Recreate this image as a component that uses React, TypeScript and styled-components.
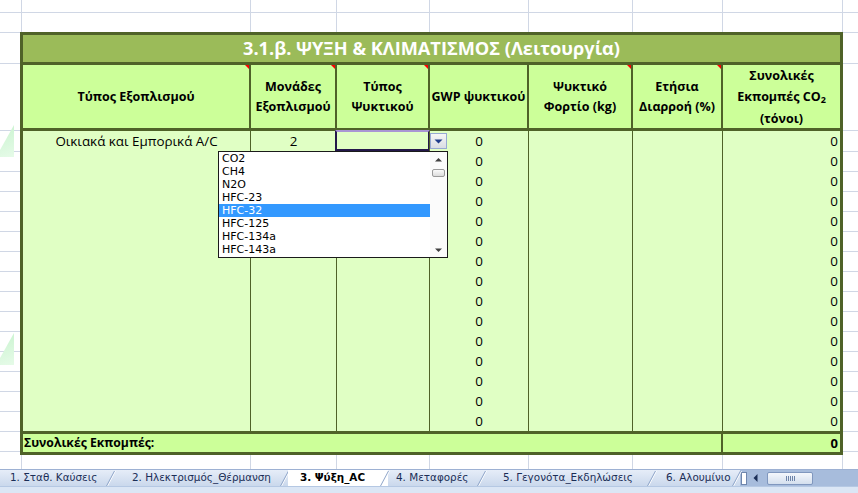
import React from 'react'
import styled, { createGlobalStyle } from 'styled-components'

const GRID = '#d0d7e5'
const OLIVE = '#4f6228'
const HEAD_BG = '#ccff99'
const CELL_BG = '#e0ffc4'

const GlobalStyle = createGlobalStyle`
  html, body {
    margin: 0;
    padding: 0;
    background: #fff;
  }
  body {
    font-family: 'Open Sans', 'Noto Sans', sans-serif;
    overflow: hidden;
  }
`

// gridlines of the sheet behind the table
const lines = (xs: number[], ys: number[]) => {
  const v = xs.map((x) => `linear-gradient(${GRID}, ${GRID}) ${x}px 0 / 1px 100% no-repeat`)
  const h = ys.map((y) => `linear-gradient(${GRID}, ${GRID}) 0 ${y}px / 100% 1px no-repeat`)
  return [...v, ...h, '#fff'].join(', ')
}

const COL_X = [21, 250, 336, 429, 528, 632, 722, 842]
const ROW_Y = [0, 31, 98, ...Array.from({ length: 16 }, (_, i) => 119 + i * 20)]

const zeros = Array.from({ length: 15 }, () => '0')

const refrigerants = ['CO2', 'CH4', 'N2O', 'HFC-23', 'HFC-32', 'HFC-125', 'HFC-134a', 'HFC-143a']

const tabs = [
  { label: '1. Σταθ. Καύσεις', w: 114, pad: 10 },
  { label: '2. Ηλεκτρισμός_Θέρμανση', w: 174, pad: 18 },
  { label: '3. Ψύξη_AC', w: 100, pad: 12, active: true },
  { label: '4. Μεταφορές', w: 97, pad: 8 },
  { label: '5. Γεγονότα_Εκδηλώσεις', w: 170, pad: 18 },
  { label: '6. Αλουμίνιο', w: 85, pad: 11 },
]

const App: React.FC = () => {
  return (
    <Sheet>
      <GlobalStyle />
      <TopArea />
      <Middle>
        <Margin $w={20}>
          <Leaf $top={93} />
          <Leaf $top={301} />
        </Margin>
        <Table>
          <Title>3.1.β. ΨΥΞΗ &amp; ΚΛΙΜΑΤΙΣΜΟΣ (Λειτουργία)</Title>
          <HeaderRow>
            <HeadCell $note>
              <span>Τύπος Εξοπλισμού</span>
            </HeadCell>
            <HeadCell $note>
              <span>
                Μονάδες
                <br />
                Εξοπλισμού
              </span>
            </HeadCell>
            <HeadCell $note>
              <span>
                Τύπος
                <br />
                Ψυκτικού
              </span>
            </HeadCell>
            <HeadCell>
              <span>GWP ψυκτικού</span>
            </HeadCell>
            <HeadCell $note>
              <span>
                Ψυκτικό
                <br />
                Φορτίο (kg)
              </span>
            </HeadCell>
            <HeadCell $note>
              <span>
                Ετήσια
                <br />
                Διαρροή (%)
              </span>
            </HeadCell>
            <HeadCell $tall>
              <span>
                Συνολικές
                <br />
                Εκπομπές CO<Sub>2</Sub>
                <br />
                (τόνοι)
              </span>
            </HeadCell>
          </HeaderRow>
          <Body>
            <BodyCol $align="center">
              <Line>Οικιακά και Εμπορικά A/C</Line>
            </BodyCol>
            <BodyCol $align="center">
              <Line>2</Line>
            </BodyCol>
            <BodyCol $align="center">
              <Line $active />
            </BodyCol>
            <BodyCol $align="center">
              {zeros.map((z, i) => (
                <Line key={i}>{z}</Line>
              ))}
            </BodyCol>
            <BodyCol $align="center" />
            <BodyCol $align="center" />
            <BodyCol $align="right">
              {zeros.map((z, i) => (
                <Line key={i}>{z}</Line>
              ))}
            </BodyCol>

            <DropButton>
              <svg width="9" height="5" viewBox="0 0 9 5">
                <path d="M0.5 0.5 H8.5 L4.5 4.5 Z" fill="#1f3d8c" />
              </svg>
            </DropButton>
            <List>
              <Items>
                {refrigerants.map((r) => (
                  <Item key={r} $selected={r === 'HFC-32'}>
                    {r}
                  </Item>
                ))}
              </Items>
              <ScrollBar>
                <svg width="9" height="5" viewBox="0 0 9 5">
                  <path d="M1 4.5 H8 L4.5 1 Z" fill="#404040" />
                </svg>
                <Thumb />
                <Spacer />
                <svg width="9" height="5" viewBox="0 0 9 5">
                  <path d="M1 0.5 H8 L4.5 4 Z" fill="#404040" />
                </svg>
              </ScrollBar>
            </List>
          </Body>
          <TotalRow>
            <TotalCell>Συνολικές Εκπομπές:</TotalCell>
            <TotalCell $right>0</TotalCell>
          </TotalRow>
        </Table>
        <Margin $w={15} />
      </Middle>
      <BottomArea />
      <TabBar>
        <Tabs>
          {tabs.map((t) => (
            <Tab key={t.label} $w={t.w} $pad={t.pad} $active={t.active}>
              {t.label}
            </Tab>
          ))}
        </Tabs>
        <ScrollZone>
          <SplitBox />
          <svg width="5" height="8" viewBox="0 0 5 8">
            <path d="M4.5 0 V8 L0.5 4 Z" fill="#1b2e57" />
          </svg>
          <HThumb>
            <Grip />
          </HThumb>
        </ScrollZone>
      </TabBar>
      <Strip />
    </Sheet>
  )
}

const Sheet = styled.div`
  position: relative;
  display: flex;
  flex-direction: column;
  width: 858px;
  height: 493px;
  overflow: hidden;
  background: #fff;
`

const TopArea = styled.div`
  height: 32px;
  background: ${lines(COL_X, [12])};
`

const Middle = styled.div`
  display: flex;
  height: 423px;
`

const Margin = styled.div<{ $w: number }>`
  position: relative;
  flex: 0 0 ${(p) => p.$w}px;
  background: ${lines([], ROW_Y)};
`

const Leaf = styled.div<{ $top: number }>`
  position: absolute;
  left: 0;
  top: ${(p) => p.$top}px;
  width: 14px;
  height: 32px;
  background: linear-gradient(160deg, #c9f3cf, #e6fbe8);
  clip-path: polygon(0 78%, 100% 0, 100% 100%, 0 100%);
`

const Table = styled.div`
  display: flex;
  flex-direction: column;
  width: 823px;
  flex: 0 0 823px;
  border: 3px solid ${OLIVE};
  box-sizing: border-box;
  color: #000;
`

const Title = styled.div`
  height: 30px;
  box-sizing: border-box;
  border-bottom: 3px solid ${OLIVE};
  background: #9bbb59;
  color: #fff;
  font-weight: 700;
  font-size: 18.2px;
  line-height: 27px;
  text-align: center;
  white-space: nowrap;
`

const HeaderRow = styled.div`
  display: grid;
  grid-template-columns: 226px 86px 93px 99px 104px 90px 119px;
  height: 66px;
  box-sizing: border-box;
  border-bottom: 3px solid ${OLIVE};
  background: ${HEAD_BG};
`

const HeadCell = styled.div<{ $note?: boolean; $tall?: boolean }>`
  position: relative;
  display: flex;
  align-items: center;
  justify-content: center;
  text-align: center;
  white-space: nowrap;
  font-weight: 700;
  font-size: 12.5px;
  line-height: ${(p) => (p.$tall ? '21px' : '20px')};

  & + & {
    border-left: 2px solid ${OLIVE};
  }

  &::after {
    content: '';
    display: ${(p) => (p.$note ? 'block' : 'none')};
    position: absolute;
    top: 0;
    right: 0;
    border-top: 4px solid #ff0000;
    border-left: 4px solid transparent;
  }
`

const Sub = styled.span`
  font-size: 9px;
  position: relative;
  top: 2px;
`

const Body = styled.div`
  position: relative;
  display: grid;
  grid-template-columns: 227px 86px 93px 99px 104px 90px 118px;
  height: 300px;
  background: ${CELL_BG};
`

const BodyCol = styled.div<{ $align: 'left' | 'center' | 'right' }>`
  display: flex;
  flex-direction: column;
  text-align: ${(p) => p.$align};
  padding-right: ${(p) => (p.$align === 'right' ? '2px' : '0')};
  font-size: 13.4px;

  & + & {
    border-left: 1px solid ${OLIVE};
  }
`

const Line = styled.div<{ $active?: boolean }>`
  height: 20px;
  line-height: 20px;
  white-space: nowrap;
  box-sizing: border-box;
  ${(p) =>
    p.$active
      ? `
    margin: -1px -1px 0 -2px;
    height: 21px;
    border: 2px solid #24184a;
    border-top-color: #a895d4;
  `
      : ''}
`

const DropButton = styled.div`
  position: absolute;
  left: 407px;
  top: 2px;
  width: 17px;
  height: 16px;
  box-sizing: border-box;
  display: flex;
  align-items: center;
  justify-content: center;
  border: 1px solid #97aad3;
  background: linear-gradient(#f6f6f6, #d9dde4);
`

const List = styled.div`
  position: absolute;
  left: 195px;
  top: 20px;
  width: 230px;
  height: 107px;
  box-sizing: border-box;
  display: flex;
  border: 1px solid #1a1a1a;
  background: #fff;
  font-family: 'DejaVu Sans', Verdana, sans-serif;
  font-size: 11px;
`

const Items = styled.div`
  flex: 1;
  display: flex;
  flex-direction: column;
`

const Item = styled.div<{ $selected?: boolean }>`
  height: 13px;
  line-height: 13px;
  padding-left: 3px;
  background: ${(p) => (p.$selected ? '#3399ff' : 'transparent')};
  color: ${(p) => (p.$selected ? '#fff' : '#000')};
`

const ScrollBar = styled.div`
  width: 17px;
  display: flex;
  flex-direction: column;
  align-items: center;
  padding: 5px 0 4px;
  box-sizing: border-box;
  background: #fbfbfb;
`

const Thumb = styled.div`
  margin-top: 7px;
  width: 13px;
  height: 8px;
  box-sizing: border-box;
  border: 1px solid #9a9a9a;
  border-radius: 2px;
  background: linear-gradient(#fafafa, #dcdcdc);
`

const Spacer = styled.div`
  flex: 1;
`

const TotalRow = styled.div`
  display: grid;
  grid-template-columns: 698px 119px;
  height: 21px;
  box-sizing: border-box;
  border-top: 3px solid ${OLIVE};
  background: ${HEAD_BG};
`

const TotalCell = styled.div<{ $right?: boolean }>`
  font-weight: 700;
  font-size: 12.2px;
  line-height: 18px;
  padding: 0 ${(p) => (p.$right ? '2px' : '0')} 0 ${(p) => (p.$right ? '0' : '1px')};
  text-align: ${(p) => (p.$right ? 'right' : 'left')};
  white-space: nowrap;

  & + & {
    font-size: 13px;
    border-left: 2px solid ${OLIVE};
  }
`

const BottomArea = styled.div`
  height: 14px;
  background: ${lines(COL_X, [])};
`

const TabBar = styled.div`
  display: flex;
  height: 17px;
  box-sizing: border-box;
  border-top: 1px solid #9db1d3;
  background: linear-gradient(#e6edf8, #cad8ec);
  font-family: 'DejaVu Sans', Verdana, sans-serif;
  font-size: 10.4px;
`

const Tabs = styled.div`
  display: flex;
  flex: 0 0 740px;
`

const Tab = styled.div<{ $w: number; $pad: number; $active?: boolean }>`
  position: relative;
  flex: 0 0 ${(p) => p.$w}px;
  box-sizing: border-box;
  padding-left: ${(p) => p.$pad}px;
  line-height: 15px;
  white-space: nowrap;
  color: ${(p) => (p.$active ? '#000' : '#1b2e57')};
  font-weight: ${(p) => (p.$active ? 700 : 400)};
  background: ${(p) => (p.$active ? '#fff' : 'transparent')};

  &::after {
    content: '';
    position: absolute;
    right: 3px;
    top: 1px;
    bottom: 0;
    width: 1px;
    background: #8ea5c9;
    box-shadow: 1px 0 0 #ffffff;
    transform: skewX(-28deg);
  }
`

const ScrollZone = styled.div`
  flex: 1;
  display: flex;
  align-items: center;
  gap: 6px;
  padding-left: 1px;
  background: #a7bcdc;
`

const SplitBox = styled.div`
  width: 4px;
  height: 11px;
  border: 1px solid #6f86ad;
  background: #fff;
`

const HThumb = styled.div`
  margin-left: 3px;
  width: 46px;
  height: 13px;
  box-sizing: border-box;
  display: flex;
  align-items: center;
  justify-content: center;
  border: 1px solid #8097be;
  border-radius: 2px;
  background: linear-gradient(#f4f7fc, #d4dfee);
`

const Grip = styled.div`
  width: 9px;
  height: 5px;
  background: repeating-linear-gradient(90deg, #6d83a8 0 1px, transparent 1px 2px);
`

const Strip = styled.div`
  flex: 1;
  border-top: 1px solid #b5c8e3;
  background: #dbe6f5;
`

export default App
